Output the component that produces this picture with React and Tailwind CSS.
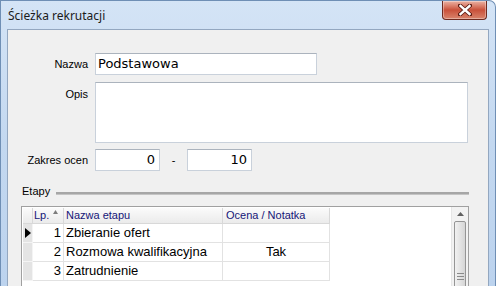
const label = "font-['Liberation_Sans',Arial,sans-serif] text-[11px] text-black";
const field = "bg-white border border-[#c9d1db] border-t-[#abb3bd]";

function CloseButton() {
  return (
    <div className="absolute right-[8px] top-0 w-[45px] h-[19px] rounded-b-[4px] border border-t-0 border-[#6e2a20] bg-gradient-to-b from-[#eab2a4] via-[#c9503a] to-[#d8836c] flex items-center justify-center shadow-[inset_0_0_0_1px_rgba(255,255,255,0.35)]">
      <svg width="14" height="12" viewBox="0 0 14 12">
        <path d="M2 1.5 L12 10.5 M12 1.5 L2 10.5" stroke="#5a1a12" strokeWidth="4" strokeLinecap="square" />
        <path d="M2.5 2 L11.5 10 M11.5 2 L2.5 10" stroke="#ffffff" strokeWidth="2.4" strokeLinecap="square" />
      </svg>
    </div>
  );
}

function ScrollBar() {
  return (
    <div className="w-[17px] shrink-0 bg-[#f2f2f2] border-l border-[#e6e6e6] flex flex-col">
      <div className="h-[17px] flex items-center justify-center">
        <svg width="7" height="4" viewBox="0 0 7 4">
          <path d="M0 4 L3.5 0 L7 4 Z" fill="#606060" />
        </svg>
      </div>
      <div className="mx-[2px] mt-[1px] h-[80px] rounded-[2px] border border-[#959595] bg-gradient-to-r from-[#f1f1f1] to-[#d6d6d6] flex flex-col items-center pt-[51px] gap-[2px]">
        <div className="w-[7px] h-px bg-[#8a8a8a]" />
        <div className="w-[7px] h-px bg-[#8a8a8a]" />
        <div className="w-[7px] h-px bg-[#8a8a8a]" />
      </div>
    </div>
  );
}

const rows = [
  { lp: 1, name: "Zbieranie ofert", note: "", current: true },
  { lp: 2, name: "Rozmowa kwalifikacyjna", note: "Tak" },
  { lp: 3, name: "Zatrudnienie", note: "" },
];

function Grid() {
  const head = "h-[16px] bg-gradient-to-b from-[#fbfbfb] to-[#ebebeb] border-r border-b border-[#d8d8d8] text-[#161678] leading-[15px] px-[2px]";
  const cell = "h-[19px] border-r border-b border-[#e2e2e2] leading-[18px] font-['Liberation_Sans',Arial,sans-serif] text-[13px] text-black px-[2px] whitespace-nowrap overflow-hidden";
  return (
    <div className="ml-[13px] mt-[7px] w-[448px] h-[90px] border border-[#a0a0a0] bg-white flex">
      <div className="flex-1 pl-px pt-px">
        <div className={`grid grid-cols-[10px_31px_159px_107px] ${label}`}>
          <div className={head} />
          <div className={`${head} flex items-start gap-[4px] pl-[1px]`}>
            <span>Lp.</span>
            <svg width="5" height="4" viewBox="0 0 5 4" className="mt-[2px]">
              <path d="M0 4 L2.5 0 L5 4 Z" fill="#7c7c7c" />
            </svg>
          </div>
          <div className={head}>Nazwa etapu</div>
          <div className={`${head} pl-[3px]`}>Ocena / Notatka</div>
          {rows.map((r) => (
            <div key={r.lp} className="contents">
              <div className="h-[19px] bg-[#e4e4e4] border-r border-b border-[#f4f4f4] flex items-center justify-center">
                {r.current && (
                  <svg width="6" height="10" viewBox="0 0 6 10">
                    <path d="M0 0 L6 5 L0 10 Z" fill="#000" />
                  </svg>
                )}
              </div>
              <div className={`${cell} text-right pr-[2px]`}>{r.lp}</div>
              <div className={cell}>{r.name}</div>
              <div className={`${cell} text-center`}>{r.note}</div>
            </div>
          ))}
        </div>
      </div>
      <ScrollBar />
    </div>
  );
}

export default function App() {
  return (
    <div className="relative w-[496px] h-[286px] overflow-hidden rounded-tr-[7px] border-l border-t border-r border-[#6f8fb5] bg-gradient-to-b from-[#d4e4f6] via-[#c3d8f0] to-[#bcd3ee] flex flex-col">
      <div className="h-[28px] shrink-0 flex items-center pl-[7px] pt-[2px] font-['Noto_Sans',sans-serif] text-[12px] text-[#1b1b1b]">
        Ścieżka rekrutacji
      </div>
      <CloseButton />
      <div className="ml-[6px] w-[482px] flex-1 border border-b-0 border-[#93a7c0] bg-[#f0f0f0] flex flex-col">
        <div className="mt-[23px] flex items-center">
          <div className={`w-[80px] text-right ${label}`}>Nazwa</div>
          <div className={`ml-[7px] w-[222px] h-[22px] ${field} px-[2px] leading-[20px] font-['DejaVu_Sans',sans-serif] text-[13px] text-black`}>
            Podstawowa
          </div>
        </div>
        <div className="mt-[7px] flex items-start">
          <div className={`w-[80px] text-right pt-[4px] ${label}`}>Opis</div>
          <div className={`ml-[7px] w-[373px] h-[61px] ${field}`} />
        </div>
        <div className="mt-[6px] flex items-center">
          <div className={`w-[80px] text-right ${label}`}>Zakres ocen</div>
          <div className={`ml-[7px] w-[65px] h-[22px] ${field} text-right pr-[4px] leading-[20px] font-['DejaVu_Sans',sans-serif] text-[13px] text-black`}>
            0
          </div>
          <div className={`w-[27px] text-center ${label}`}>-</div>
          <div className={`w-[65px] h-[22px] ${field} text-right pr-[4px] leading-[20px] font-['DejaVu_Sans',sans-serif] text-[13px] text-black`}>
            10
          </div>
        </div>
        <div className="mt-[12px] h-[16px] ml-[14px] w-[447px] flex items-center">
          <span className={label}>Etapy</span>
          <div className="ml-[6px] mt-[5px] flex-1 h-[3px] bg-[#a6a6a6] border-b border-[#c4c4c4]" />
        </div>
        <Grid />
      </div>
    </div>
  );
}
